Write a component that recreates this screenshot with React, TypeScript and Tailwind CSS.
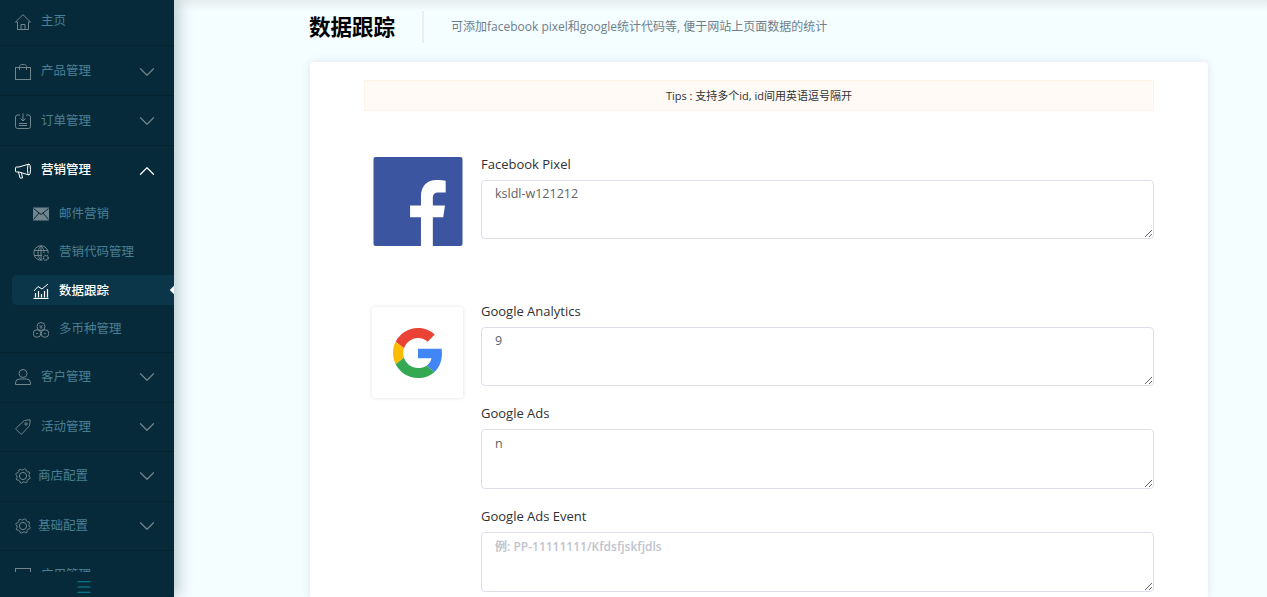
import React from 'react';
import { ChevronDown, ChevronUp, Menu } from 'lucide-react';

const zh = { fontFamily: '"Open Sans", "Noto Sans CJK SC", sans-serif' };

// 8 tooth gear outline for the config rows
const gearPath = Array.from({ length: 32 }, (_, i) => {
  const a = (i / 32) * Math.PI * 2 + Math.PI / 16;
  const r = i % 4 < 2 ? 7.3 : 6;
  return `${i === 0 ? 'M' : 'L'}${(8 + r * Math.cos(a)).toFixed(2)} ${(8 + r * Math.sin(a)).toFixed(2)}`;
}).join('') + 'Z';

const Svg = ({ children, size = 16, className = '' }: any) => (
  <svg viewBox="0 0 16 16" width={size} height={size} fill="none" stroke="currentColor" strokeWidth={1} className={`shrink-0 ${className}`}>
    {children}
  </svg>
);

const HomeIcon = (p: any) => <Svg {...p}><path d="M.5 8L8 .7L15.5 8H13.5V15.5H2.5V8ZM6 15.5V10.5H10V15.5" /></Svg>;
const BagIcon = (p: any) => <Svg {...p}><rect x=".5" y="3.5" width="15" height="12" /><path d="M4.5 6V2.5C4.5 1 6 .5 8 .5S11.5 1 11.5 2.5V6" /></Svg>;
const OrderIcon = (p: any) => <Svg {...p}><path d="M5 2H2.5A2 2 0 0 0 .5 4V13.5A2 2 0 0 0 2.5 15.5H13.5A2 2 0 0 0 15.5 13.5V4A2 2 0 0 0 13.5 2H11M8 .5V8M5.5 5.5L8 8L10.5 5.5M4 10.5H12M4 12.5H12" /></Svg>;
const HornIcon = (p: any) => <Svg {...p}><ellipse cx="14" cy="6.5" rx="1.5" ry="5.5" /><path d="M14 1L4 4H1.5A1 1 0 0 0 .5 5V8A1 1 0 0 0 1.5 9H4L14 12M3.5 9L5 15H7.5L6.5 9.8" /></Svg>;
const MailIcon = (p: any) => (
  <Svg {...p}>
    <rect x=".5" y="2" width="15" height="12" fill="currentColor" />
    <path d="M.5 2.5L8 8.5L15.5 2.5M.5 13.5L6 7M15.5 13.5L10 7" stroke="#072a3a" />
  </Svg>
);
const GlobeIcon = (p: any) => (
  <Svg {...p}>
    <path d="M9.5 15A7.2 7.2 0 1 1 15.2 8.5M8 .8C5.5 3 5 6 5 8S5.5 13 8 15.2M8 .8C10.5 3 11 6 11 8M8 .8V15M1 5.5H15M1 10.5H9" />
    <circle cx="12.8" cy="12.8" r="2.4" strokeDasharray="1.2 .6" strokeWidth={1.4} />
  </Svg>
);
const ChartIcon = (p: any) => (
  <Svg {...p}>
    <path d="M.5 15.5H15.5" strokeWidth={1.2} />
    <path d="M2.5 14.5V10M5.5 14.5V8M8.5 14.5V11M11.5 14.5V8M14.5 14.5V6" strokeWidth={1.2} />
    <path d="M1 8L5 3.5L9 6L15 1" />
  </Svg>
);
const CoinsIcon = (p: any) => (
  <Svg {...p}>
    <circle cx="8" cy="4.5" r="4" />
    <circle cx="4" cy="11.5" r="3.8" />
    <circle cx="12" cy="11.5" r="3.8" />
    <path d="M6.5 3L8 4.8L9.5 3M8 4.8V7M6.5 5.2H9.5M2.8 11.5H5.2M10.8 11.5H13.2" strokeWidth={.8} />
  </Svg>
);
const UserIcon = (p: any) => <Svg {...p}><circle cx="8" cy="4.5" r="4" /><path d="M.5 15.5V14A4 4 0 0 1 4.5 10H11.5A4 4 0 0 1 15.5 14V15.5Z" /></Svg>;
const TagIcon = (p: any) => <Svg {...p}><path d="M9.5 1.5L14 .8A1 1 0 0 1 15.2 2L14.5 6.5A1 1 0 0 1 14.2 7L7 14.8A1 1 0 0 1 5.6 14.8L1.2 10.4A1 1 0 0 1 1.2 9L9 1.8A1 1 0 0 1 9.5 1.5Z" /><circle cx="11" cy="5" r="1.2" /></Svg>;
const GearIcon = (p: any) => <Svg {...p}><path d={gearPath} strokeLinejoin="round" /><circle cx="8" cy="8" r="3.6" /></Svg>;
const AppIcon = (p: any) => <Svg {...p}><rect x=".5" y=".5" width="15" height="15" /><path d="M4 4V5M12 4V5" strokeWidth={1.5} /></Svg>;

const FacebookLogo = () => (
  <svg viewBox="0 0 90 90" className="w-[90px] h-[89px] mt-[2px] ml-[9px] shrink-0 rounded-[3px]">
    <rect width="90" height="90" fill="#3b55a0" />
    <path fill="#fff" d="M60 90V61H70.5L72.3 49H60V42C60 38 61.5 36 66 36H73V24C71 23.7 68 23.3 64 23.3C54 23.3 48 29.5 48 40V49H37V61H48V90Z" />
  </svg>
);

const GoogleLogo = () => (
  <div className="w-[91px] h-[91px] mt-[5px] ml-[8px] shrink-0 rounded-[3px] bg-white shadow-[0_0_4px_rgba(0,0,0,0.12)] flex items-center justify-center">
    <svg viewBox="0 0 48 48" className="w-[50px] h-[50px]">
      <path fill="#EA4335" d="M24 9.5c3.54 0 6.71 1.22 9.21 3.6l6.85-6.85C35.9 2.38 30.47 0 24 0 14.62 0 6.51 5.38 2.56 13.22l7.98 6.19C12.43 13.72 17.74 9.5 24 9.5z" />
      <path fill="#4285F4" d="M46.98 24.55c0-1.57-.15-3.09-.38-4.55H24v9.02h12.94c-.58 2.96-2.26 5.48-4.78 7.18l7.73 6c4.51-4.18 7.09-10.36 7.09-17.65z" />
      <path fill="#FBBC05" d="M10.53 28.59c-.48-1.45-.76-2.99-.76-4.59s.27-3.14.76-4.59l-7.98-6.19C.92 16.46 0 20.12 0 24c0 3.88.92 7.54 2.56 10.78l7.97-6.19z" />
      <path fill="#34A853" d="M24 48c6.48 0 11.93-2.13 15.89-5.81l-7.73-6c-2.15 1.45-4.92 2.3-8.16 2.3-6.26 0-11.57-4.22-13.47-9.91l-7.98 6.19C6.51 42.62 14.62 48 24 48z" />
    </svg>
  </div>
);

const MenuRow = ({ icon: Icon, label, h = 'h-[49.6px]', nudge = 'pt-[1px]', arrow = true, active = false, tight = false }: any) => (
  <div className={`${h} ${nudge} shrink-0 flex items-center pl-[15px] pr-[20px] border-b border-[#05222f] ${active ? 'text-white border-b-0' : 'text-[#4a7f92]'}`}>
    <Icon className={active ? 'text-white' : 'text-[#71858e]'} />
    <span className={`text-[12.5px] flex-1 ${tight ? 'ml-[7px]' : 'ml-[10px]'} ${active ? 'font-medium' : ''}`}>{label}</span>
    {arrow && (active
      ? <ChevronUp size={26} strokeWidth={1.1} className="-mr-[6px] text-white" />
      : <ChevronDown size={26} strokeWidth={1.1} className="-mr-[6px] text-[#71858e]" />)}
  </div>
);

const SubRow = ({ icon: Icon, label, active = false }: any) => (
  <div className={`relative h-[30px] pt-[3px] flex items-center ml-[12px] pl-[21px] rounded-l-[5px] ${active ? 'bg-[#0b3548] text-white font-medium' : 'text-[#4a7f92]'}`}>
    <Icon className={active ? 'text-white' : 'text-[#71858e]'} />
    <span className="text-[12.5px] ml-[10px]">{label}</span>
    {active && <span className="absolute right-[-3px] top-[12px] w-[6px] h-[6px] bg-white rotate-45" />}
  </div>
);

const Field = ({ label, value, placeholder, h, pad = 'py-[3px]', last }: any) => (
  <div className={last ? '' : 'mb-[18px]'}>
    <label className="block text-[13px] leading-[18px] mb-[7px] text-[#303133]">{label}</label>
    <textarea
      defaultValue={value}
      placeholder={placeholder}
      style={zh}
      className={`block w-full ${h} px-[13px] ${pad} text-[12.5px] leading-[19px] text-[#606266] border border-[#dcdfe6] rounded-[4px] outline-none placeholder:text-[#c0c4cc] placeholder:font-semibold placeholder:text-[12px]`}
    />
  </div>
);

export default function App() {
  return (
    <div className="h-[597px] flex overflow-hidden bg-[#f4fdff]" style={zh}>
      <aside className="relative z-10 w-[174px] shrink-0 bg-[#072a3a] shadow-[4px_0_14px_rgba(7,42,58,0.25)] flex flex-col">
        <div className="flex-1 min-h-0 overflow-hidden">
          <div className="-mt-[4px]">
            <MenuRow icon={HomeIcon} label="主页" arrow={false} h="h-[50px]" nudge="pt-[2px]" />
            <MenuRow icon={BagIcon} label="产品管理" h="h-[50px]" nudge="pt-[2px]" />
            <MenuRow icon={OrderIcon} label="订单管理" h="h-[49.5px]" nudge="pt-[2px]" />
            <MenuRow icon={HornIcon} label="营销管理" active h="h-[49px]" />
            <div className="flex flex-col gap-[8.5px] pt-[3px] pb-[9px] border-b border-[#05222f]">
              <SubRow icon={MailIcon} label="邮件营销" />
              <SubRow icon={GlobeIcon} label="营销代码管理" />
              <SubRow icon={ChartIcon} label="数据跟踪" active />
              <SubRow icon={CoinsIcon} label="多币种管理" />
            </div>
            <MenuRow icon={UserIcon} label="客户管理" h="h-[49.5px]" nudge="" />
            <MenuRow icon={TagIcon} label="活动管理" h="h-[49.5px]" />
            <MenuRow icon={GearIcon} label="商店配置" tight h="h-[49.5px]" nudge="" />
            <MenuRow icon={GearIcon} label="基础配置" tight h="h-[49.5px]" />
            <MenuRow icon={AppIcon} label="应用管理" />
          </div>
        </div>
        <div className="h-[25px] pt-[4px] shrink-0 flex items-center justify-center pr-[6px] bg-[#072a3a]">
          <Menu size={18} strokeWidth={1.6} className="text-[#0b8a9e]" />
        </div>
      </aside>

      <main className="flex-1 min-w-0 flex flex-col">
        <div className="h-[11px] shrink-0 bg-gradient-to-b from-[#e6edef] to-transparent" />
        <div className="h-[32px] shrink-0 ml-[135px] flex items-center">
          <h1 className="text-[21.5px] pt-[1px] font-bold text-black w-[113px]">数据跟踪</h1>
          <div className="w-[2px] h-[32px] bg-[#e9eef0]" />
          <p className="ml-[27px] text-[12px] text-[#6f7f8a]">可添加facebook pixel和google统计代码等, 便于网站上页面数据的统计</p>
        </div>
        <div className="flex-1 ml-[136px] mr-[59px] mt-[19px] px-[54px] pt-[18px] bg-white rounded-t-[4px] shadow-[0_0_10px_rgba(7,42,58,0.1)]">
          <div className="h-[31px] pt-[1px] flex items-center justify-center bg-[#fffaf6] border border-[#fdf3e7] text-[11px] text-[#303133]">
            Tips : 支持多个id, id间用英语逗号隔开
          </div>
          <div className="flex gap-[18px] mt-[44px]">
            <FacebookLogo />
            <div className="flex-1">
              <Field label="Facebook Pixel" value="ksldl-w121212" h="h-[59px]" last />
            </div>
          </div>
          <div className="flex gap-[18px] mt-[56px]">
            <GoogleLogo />
            <div className="flex-1">
              <Field label="Google Analytics" value="9" h="h-[59px]" />
              <Field label="Google Ads" value="n" h="h-[60px]" pad="py-[4px]" />
              <Field label="Google Ads Event" placeholder="例: PP-11111111/Kfdsfjskfjdls" h="h-[60px]" pad="py-[4px]" last />
            </div>
          </div>
        </div>
      </main>
    </div>
  );
}
